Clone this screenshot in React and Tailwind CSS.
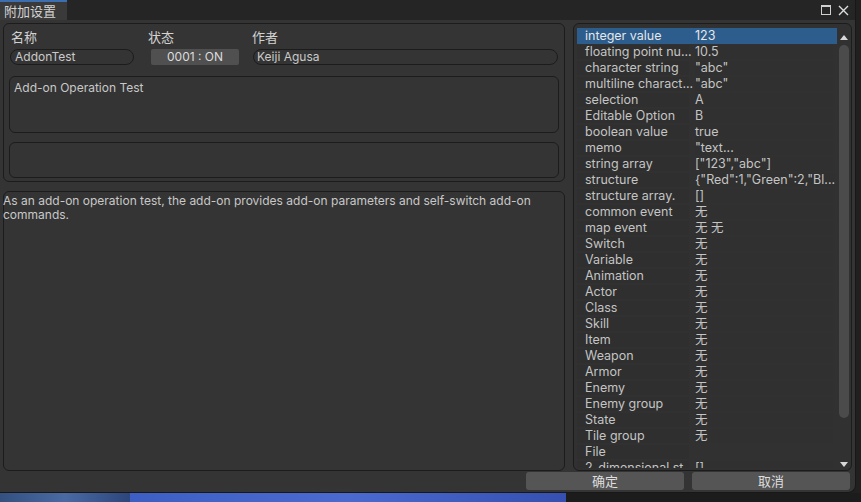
const rows = [
  ['integer value', '123'],
  ['floating point nu...', '10.5'],
  ['character string', '"abc"'],
  ['multiline charact...', '"abc"'],
  ['selection', 'A'],
  ['Editable Option', 'B'],
  ['boolean value', 'true'],
  ['memo', '"text...'],
  ['string array', '["123","abc"]'],
  ['structure', '{"Red":1,"Green":2,"Bl...'],
  ['structure array.', '[]'],
  ['common event', '无'],
  ['map event', '无 无'],
  ['Switch', '无'],
  ['Variable', '无'],
  ['Animation', '无'],
  ['Actor', '无'],
  ['Class', '无'],
  ['Skill', '无'],
  ['Item', '无'],
  ['Weapon', '无'],
  ['Armor', '无'],
  ['Enemy', '无'],
  ['Enemy group', '无'],
  ['State', '无'],
  ['Tile group', '无'],
  ['File', ''],
  ['2-dimensional st...', '[]'],
];

const font = { fontFamily: 'Inter, "Noto Sans CJK SC", sans-serif' };

function ParamList() {
  return (
    <div className="flex h-[448px] w-[279px] rounded-[6px] border border-[#1c1c1c] bg-[#313131] pl-[3px] pt-[4px] text-[12.5px]">
      <div className="h-[440px] flex-1 overflow-hidden">
        {rows.map(([k, v], i) => (
          <div
            key={k}
            className={
              i === 0
                ? 'flex h-[16px] items-center bg-[#2c5d8c] text-[#e6e6e6]'
                : 'flex h-[16px] items-center text-[#c4c4c4]'
            }
          >
            <div className={i === 0 ? 'w-[118px] shrink-0 pl-[8px] whitespace-nowrap' : 'mr-[6px] w-[112px] shrink-0 bg-[#2f2f2f] pl-[8px] whitespace-nowrap'}>
              {k}
            </div>
            <div className={i === 0 ? 'flex-1 whitespace-nowrap' : 'mr-[4px] flex-1 bg-[#303030] whitespace-nowrap'}>{v}</div>
          </div>
        ))}
      </div>
      {/* scrollbar */}
      <div className="flex w-[14px] shrink-0 flex-col items-center pt-[7px] pb-[3px]">
        <div className="h-0 w-0 border-x-[4px] border-b-[5px] border-x-transparent border-b-[#d8d8d8]" />
        <div className="mt-[5px] h-[373px] w-[10px] rounded-full bg-[#4b4b4b]" />
        <div className="flex-1" />
        <div className="h-0 w-0 border-x-[4px] border-t-[5px] border-x-transparent border-t-[#d8d8d8]" />
      </div>
    </div>
  );
}

export default function App() {
  return (
    <div className="relative flex h-[502px] w-[861px] flex-col bg-[#202020] text-[12px] leading-[14px]" style={font}>
      <div className="flex h-[493px] w-[856px] flex-col overflow-hidden rounded-br-[8px] border-r border-b border-[#181818] bg-[#343434]">
        {/* title bar */}
        <div className="flex h-[20px] shrink-0 items-stretch bg-[#252525]">
          <div className="flex w-[67px] items-center border-t-2 border-[#3d6fb0] bg-[#3a3a3a] pl-[4px] text-[13px] text-[#d4d4d4]">
            附加设置
          </div>
          <div className="flex-1" />
          <div className="flex items-center gap-[7px] pr-[6px]">
            <div className="h-[10px] w-[10px] border border-t-2 border-[#cfcfcf]" />
            <svg width="11" height="11" viewBox="0 0 11 11" stroke="#dcdcdc" strokeWidth="1.4">
              <path d="M1 1 L10 10 M10 1 L1 10" />
            </svg>
          </div>
        </div>

        {/* content */}
        <div className="flex flex-1 flex-col px-[3px] pt-[3px]">
          <div className="flex h-[448px] gap-[8px]">
            {/* left column */}
            <div className="flex w-[563px] flex-col">
              <div className="h-[159px] rounded-[6px] border border-[#1c1c1c] px-[5px] pt-[6px]">
                <div className="flex h-[14px] text-[13px] text-[#d2d2d2]">
                  <span className="ml-[2px] w-[137px]">名称</span>
                  <span className="w-[104px]">状态</span>
                  <span>作者</span>
                </div>
                <div className="mt-[5px] flex h-[16px] items-center">
                  <div className="ml-[1px] flex h-[16px] w-[124px] items-center rounded-full border border-[#1c1c1c] pl-[4px] text-[#cacaca]">
                    AddonTest
                  </div>
                  <div className="ml-[17px] flex h-[16px] w-[88px] items-center justify-center rounded-[2px] bg-[#505050] text-[#dcdcdc]">
                    0001 : ON
                  </div>
                  <div className="ml-[14px] flex h-[16px] w-[305px] items-center rounded-full border border-[#1c1c1c] pl-[3px] text-[#cacaca]">
                    Keiji Agusa
                  </div>
                </div>
                <div className="mt-[11px] h-[57px] rounded-[6px] border border-[#1c1c1c] px-[4px] pt-[4px] text-[#c8c8c8]">
                  Add-on Operation Test
                </div>
                <div className="mt-[9px] h-[36px] rounded-[6px] border border-[#1c1c1c]" />
              </div>
              <div className="mt-[9px] flex-1 rounded-[6px] border border-[#1c1c1c] pt-[2px] pr-[20px] text-[#c8c8c8]">
                <p className="-ml-[1px]">
                  As an add-on operation test, the add-on provides add-on parameters and self-switch add-on commands.
                </p>
              </div>
            </div>

            {/* right column */}
            <ParamList />
          </div>

          {/* buttons */}
          <div className="mt-[1px] flex h-[18px] justify-end gap-[8px] pr-[2px]">
            <button className="w-[158px] rounded-[3px] bg-[#555555] text-[13px] text-[#dedede]">确定</button>
            <button className="w-[158px] rounded-[3px] bg-[#555555] text-[13px] text-[#dedede]">取消</button>
          </div>
        </div>
      </div>

      {/* desktop strip below the window */}
      <div className="flex h-[9px]">
        <div className="w-[130px] bg-gradient-to-r from-[#33507f] via-[#4a6aa4] to-[#2d467c]" />
        <div className="w-[436px] bg-gradient-to-r from-[#3d5fc4] via-[#4b6ad0] to-[#3550b0]" />
        <div className="flex-1 bg-[#1c1c1c]" />
      </div>
    </div>
  );
}
